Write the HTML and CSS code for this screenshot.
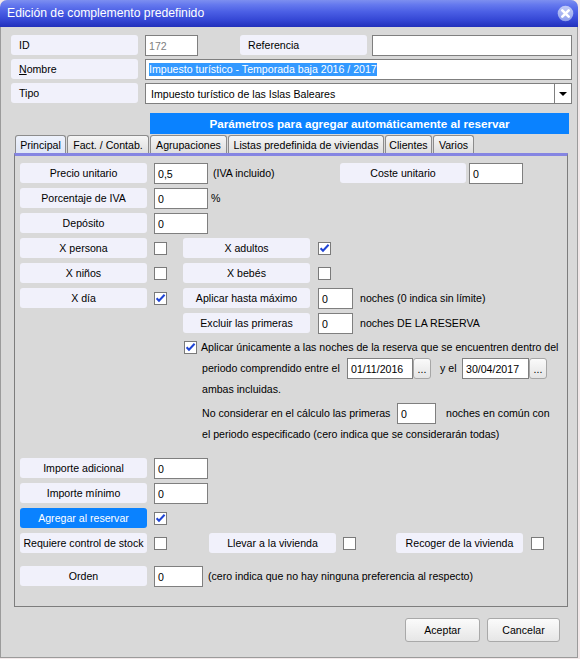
FILE: index.html
```html
<!DOCTYPE html>
<html lang="es">
<head>
<meta charset="utf-8">
<title>Edición de complemento predefinido</title>
<link rel="stylesheet" href="styles.css">
</head>
<body>
<div class="window">
  <div class="titlebar">
    <span class="title">Edición de complemento predefinido</span>
    <svg class="close" width="17" height="17" viewBox="0 0 17 17">
      <defs>
        <linearGradient id="cg" x1="0" y1="0" x2="0" y2="1">
          <stop offset="0" stop-color="#c4cdf8"/>
          <stop offset="1" stop-color="#8f9fec"/>
        </linearGradient>
      </defs>
      <circle cx="8.5" cy="8.5" r="7.8" fill="url(#cg)"/>
      <path d="M5.3 5.3 L11.7 11.7 M11.7 5.3 L5.3 11.7" stroke="#ffffff" stroke-width="2.6" stroke-linecap="round"/>
    </svg>
  </div>
  <div class="body">
    <div class="trow">
      <div class="lbl left">ID</div>
      <div class="inp w-id dim">172</div>
      <div class="lbl left m-ref">Referencia</div>
      <div class="inp w-ref"></div>
    </div>
    <div class="trow">
      <div class="lbl left"><u>N</u>ombre</div>
      <div class="inp w-wide"><span class="selected">Impuesto turístico - Temporada baja 2016 / 2017</span></div>
    </div>
    <div class="trow">
      <div class="lbl left">Tipo</div>
      <div class="inp w-wide select">
        <span class="seltext">Impuesto turístico de las Islas Baleares</span>
        <span class="arrowbox"><span class="arrow"></span></span>
      </div>
    </div>

    <div class="banner">Parámetros para agregar automáticamente al reservar</div>

    <div class="tabs">
      <div class="tab active t1">Principal</div>
      <div class="tab t2">Fact. / Contab.</div>
      <div class="tab t3">Agrupaciones</div>
      <div class="tab t4">Listas predefinida de viviendas</div>
      <div class="tab t5">Clientes</div>
      <div class="tab t6">Varios</div>
    </div>

    <div class="panel">
      <div class="prow">
        <div class="lbl">Precio unitario</div>
        <div class="inp w-num">0,5</div>
        <span class="note w-iva">(IVA incluido)</span>
        <div class="lbl w-coste">Coste unitario</div>
        <div class="inp w-num m3">0</div>
      </div>
      <div class="prow">
        <div class="lbl">Porcentaje de IVA</div>
        <div class="inp w-num">0</div>
        <span class="note m-pct">%</span>
      </div>
      <div class="prow">
        <div class="lbl">Depósito</div>
        <div class="inp w-num">0</div>
      </div>
      <div class="prow">
        <div class="lbl">X persona</div>
        <span class="cb m7"></span>
        <div class="lbl m-col2">X adultos</div>
        <span class="cb checked m8"><svg width="13" height="13" viewBox="0 0 13 13"><path d="M2.6 6.2 L5 8.8 L10.6 2.8" fill="none" stroke="#1f44d4" stroke-width="2"/></svg></span>
      </div>
      <div class="prow">
        <div class="lbl">X niños</div>
        <span class="cb m7"></span>
        <div class="lbl m-col2">X bebés</div>
        <span class="cb m8"></span>
      </div>
      <div class="prow">
        <div class="lbl">X día</div>
        <span class="cb checked m7"><svg width="13" height="13" viewBox="0 0 13 13"><path d="M2.6 6.2 L5 8.8 L10.6 2.8" fill="none" stroke="#1f44d4" stroke-width="2"/></svg></span>
        <div class="lbl m-col2">Aplicar hasta máximo</div>
        <div class="inp w-small m8">0</div>
        <span class="note m-noches">noches (0 indica sin límite)</span>
      </div>
      <div class="prow pre-opt">
        <div class="lbl m-col2only">Excluir las primeras</div>
        <div class="inp w-small m8">0</div>
        <span class="note m-noches">noches DE LA RESERVA</span>
      </div>

      <div class="opt">
        <div class="oline">
          <span class="cb checked"><svg width="13" height="13" viewBox="0 0 13 13"><path d="M2.6 6.2 L5 8.8 L10.6 2.8" fill="none" stroke="#1f44d4" stroke-width="2"/></svg></span>
          <span class="note m-opt">Aplicar únicamente a las noches de la reserva que se encuentren dentro del</span>
        </div>
        <div class="oline ind">
          <span class="note w-periodo">periodo comprendido entre el</span>
          <div class="inp w-date1">01/11/2016</div>
          <span class="dots">...</span>
          <span class="note w-yel">y el</span>
          <div class="inp w-date2">30/04/2017</div>
          <span class="dots">...</span>
        </div>
        <div class="oline ind">
          <span class="note">ambas incluidas.</span>
        </div>
        <div class="oline ind m-top3">
          <span class="note w-nocons">No considerar en el cálculo las primeras</span>
          <div class="inp w-prim">0</div>
          <span class="note m-comun">noches en común con</span>
        </div>
        <div class="oline ind short">
          <span class="note">el periodo especificado (cero indica que se considerarán todas)</span>
        </div>
      </div>

      <div class="prow m-top14">
        <div class="lbl">Importe adicional</div>
        <div class="inp w-num">0</div>
      </div>
      <div class="prow">
        <div class="lbl">Importe mínimo</div>
        <div class="inp w-num">0</div>
      </div>
      <div class="prow">
        <div class="lbl blue">Agregar al reservar</div>
        <span class="cb checked m7"><svg width="13" height="13" viewBox="0 0 13 13"><path d="M2.6 6.2 L5 8.8 L10.6 2.8" fill="none" stroke="#1f44d4" stroke-width="2"/></svg></span>
      </div>
      <div class="prow">
        <div class="lbl">Requiere control de stock</div>
        <span class="cb m7"></span>
        <div class="lbl m-llevar">Llevar a la vivienda</div>
        <span class="cb m7"></span>
        <div class="lbl m-recoger">Recoger de la vivienda</div>
        <span class="cb m8"></span>
      </div>
      <div class="prow m-top8">
        <div class="lbl">Orden</div>
        <div class="inp w-orden">0</div>
        <span class="note m5">(cero indica que no hay ninguna preferencia al respecto)</span>
      </div>
    </div>

    <div class="buttons">
      <div class="btn w-acep">Aceptar</div>
      <div class="btn w-canc">Cancelar</div>
    </div>
  </div>
</div>
</body>
</html>
```
FILE: styles.css
```css
* { box-sizing: border-box; }
html, body { margin: 0; padding: 0; background: #f3e9ea; }
body {
  font-family: "Liberation Sans", Arial, sans-serif;
  font-size: 10.6px;
  color: #000;
}
.window {
  width: 578px;
  height: 658px;
  border-radius: 7px 7px 0 0;
  overflow: hidden;
  background: #d9d9d9;
}
.titlebar {
  height: 27px;
  display: flex;
  align-items: center;
  justify-content: space-between;
  padding: 0 4px 0 7px;
  background: linear-gradient(to bottom, #7d8ff0 0%, #6478ee 18%, #4a5ee4 45%, #3446d4 75%, #2230bb 100%);
  color: #fff;
  font-size: 12.2px;
}
.title { margin-top: -1px; }
.close { margin-top: -1px; }
.body {
  height: 631px;
  border: 1px solid #9b9b9b;
  border-top: none;
  padding: 8px 0 0 10px;
  display: flex;
  flex-direction: column;
  align-items: flex-start;
}
.trow { display: flex; align-items: flex-start; height: 21px; margin-bottom: 3px; }
.lbl {
  width: 127px;
  height: 20px;
  flex-shrink: 0;
  background: #f1f1fb;
  border-radius: 3px;
  display: flex;
  align-items: center;
  justify-content: center;
  white-space: nowrap;
}
.lbl.left { justify-content: flex-start; padding-left: 8px; }
.lbl.blue { background: #0a82ff; color: #fff; }
.inp {
  height: 21px;
  flex-shrink: 0;
  background: #fff;
  border: 1px solid #7f7f7f;
  padding-left: 3px;
  display: flex;
  align-items: center;
  white-space: nowrap;
  overflow: hidden;
}
.dim { color: #808080; }
.w-id { width: 53px; margin-left: 7px; }
.m-ref { margin-left: 42px; }
.w-ref { width: 200px; margin-left: 5px; }
.w-wide { width: 427px; margin-left: 7px; }
.selected { background: #3399ff; color: #fff; line-height: 13px; }
.select { padding-left: 5px; justify-content: space-between; padding-right: 0; }
.arrowbox {
  width: 17px;
  height: 19px;
  border-left: 1px solid #7f7f7f;
  display: flex;
  align-items: center;
  justify-content: center;
}
.arrow {
  width: 0; height: 0;
  border-left: 4px solid transparent;
  border-right: 4px solid transparent;
  border-top: 4px solid #000;
}
.banner {
  margin: 6px 0 0 139px;
  width: 419px;
  height: 21px;
  background: #0a82ff;
  color: #fff;
  font-weight: bold;
  font-size: 11.7px;
  display: flex;
  align-items: center;
  justify-content: center;
}
.tabs { display: flex; margin: 1px 0 0 4px; height: 18px; }
.tab {
  height: 18px;
  border: 1px solid #8c8c8c;
  border-bottom: none;
  border-radius: 3px 3px 0 0;
  background: linear-gradient(to bottom, #f6f6f6, #dedede);
  display: flex;
  align-items: center;
  justify-content: center;
  white-space: nowrap;
  margin-right: 1px;
}
.tab.active { background: linear-gradient(to bottom, #eef2fc, #dfe6f6); }
.t1 { width: 51px; }
.t2 { width: 82px; }
.t3 { width: 77px; }
.t4 { width: 156px; }
.t5 { width: 47px; }
.t6 { width: 41px; }
.panel {
  margin-left: 3px;
  width: 554px;
  height: 454px;
  flex-shrink: 0;
  border: 1px solid #7d7d7d;
  border-top: 3px solid #8585e2;
  padding: 7px 0 0 5px;
  display: flex;
  flex-direction: column;
  align-items: flex-start;
}
.prow { display: flex; align-items: flex-start; height: 21px; margin-bottom: 4px; }
.prow.pre-opt { margin-bottom: 3px; }
.note { line-height: 21px; white-space: nowrap; flex-shrink: 0; }
.w-num { width: 54px; margin-left: 7px; }
.m3 { margin-left: 3px; }
.w-iva { width: 127px; margin-left: 5px; }
.w-coste { width: 126px; }
.m-pct { margin-left: 3px; }
.cb {
  width: 13px;
  height: 13px;
  flex-shrink: 0;
  background: #fff;
  border: 1px solid #7a7a7a;
  margin-top: 4px;
  position: relative;
}
.cb svg { position: absolute; left: -1px; top: -1px; }
.m7 { margin-left: 7px; }
.m8 { margin-left: 8px; }
.m5 { margin-left: 5px; }
.m-col2 { margin-left: 16px; }
.m-col2only { margin-left: 163px; }
.w-small { width: 35px; }
.m-noches { margin-left: 7px; }
.opt { margin: 0 0 0 164px; }
.oline { display: flex; align-items: center; height: 21px; }
.oline .cb { margin-top: 0; }
.oline.short { height: 20px; }
.ind { padding-left: 18px; }
.m-opt { margin-left: 4px; }
.m-top3 { margin-top: 3px; }
.w-periodo { width: 145px; }
.w-date1 { width: 66px; }
.w-date2 { width: 67px; }
.dots {
  width: 18px;
  height: 21px;
  flex-shrink: 0;
  border: 1px solid #a6a6a6;
  border-radius: 3px;
  background: linear-gradient(to bottom, #fafafa, #e4e4e4);
  display: flex;
  align-items: flex-end;
  justify-content: center;
  padding-bottom: 3px;
  line-height: 1;
}
.w-yel { width: 22px; margin-left: 9px; }
.w-nocons { width: 195px; }
.w-prim { width: 39px; }
.m-comun { margin-left: 10px; }
.m-top14 { margin-top: 14px; }
.m-top8 { margin-top: 8px; }
.m-llevar { margin-left: 42px; }
.m-recoger { margin-left: 40px; }
.w-orden { width: 49px; margin-left: 7px; }
.buttons { display: flex; margin: 11px 0 0 394px; }
.btn {
  height: 24px;
  border: 1px solid #a9a9a9;
  border-radius: 3px;
  background: linear-gradient(to bottom, #fbfbfb, #e6e6e6);
  display: flex;
  align-items: center;
  justify-content: center;
}
.w-acep { width: 75px; }
.w-canc { width: 73px; margin-left: 7px; }
```
